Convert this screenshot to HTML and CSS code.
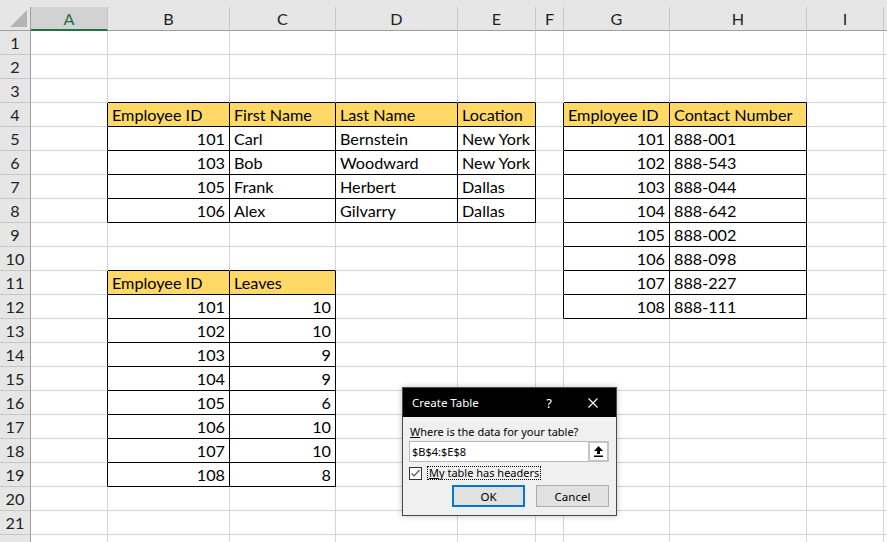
FILE: index.html
```html
<!DOCTYPE html>
<html lang="en">
<head>
  <meta charset="UTF-8">
  <title>Create Table</title>
  <link rel="stylesheet" href="styles.css">
</head>
<body>
  <div class="window">
    <div class="top-strip"></div>

    <!-- Sheet grid: row header + columns A..J -->
    <div class="sheet">
      <div class="corner"><svg width="17" height="17" viewBox="0 0 17 17"><polygon points="0,17 17,0 17,17" fill="#b4b4b4"/></svg></div>
      <div class="col-head active">A</div>
      <div class="col-head">B</div>
      <div class="col-head">C</div>
      <div class="col-head">D</div>
      <div class="col-head">E</div>
      <div class="col-head">F</div>
      <div class="col-head">G</div>
      <div class="col-head">H</div>
      <div class="col-head">I</div>
      <div class="col-head"></div>

      <!-- 1 -->
      <div class="row-head">1</div>
      <div></div><div></div><div></div><div></div><div></div><div></div><div></div><div></div><div></div><div></div>
      <!-- 2 -->
      <div class="row-head">2</div>
      <div></div><div></div><div></div><div></div><div></div><div></div><div></div><div></div><div></div><div></div>
      <!-- 3 -->
      <div class="row-head">3</div>
      <div></div><div class="bb"></div><div class="bb"></div><div class="bb"></div><div class="bb"></div><div></div><div class="bb"></div><div class="bb"></div><div></div><div></div>
      <!-- 4 -->
      <div class="row-head">4</div>
      <div class="br"></div>
      <div class="t head">Employee ID</div>
      <div class="t head">First Name</div>
      <div class="t head">Last Name</div>
      <div class="t head">Location</div>
      <div class="br"></div>
      <div class="t head">Employee ID</div>
      <div class="t head">Contact Number</div>
      <div></div><div></div>
      <!-- 5 -->
      <div class="row-head">5</div>
      <div class="br"></div>
      <div class="t num">101</div><div class="t">Carl</div><div class="t">Bernstein</div><div class="t">New York</div>
      <div class="br"></div>
      <div class="t num">101</div><div class="t">888-001</div>
      <div></div><div></div>
      <!-- 6 -->
      <div class="row-head">6</div>
      <div class="br"></div>
      <div class="t num">103</div><div class="t">Bob</div><div class="t">Woodward</div><div class="t">New York</div>
      <div class="br"></div>
      <div class="t num">102</div><div class="t">888-543</div>
      <div></div><div></div>
      <!-- 7 -->
      <div class="row-head">7</div>
      <div class="br"></div>
      <div class="t num">105</div><div class="t">Frank</div><div class="t">Herbert</div><div class="t">Dallas</div>
      <div class="br"></div>
      <div class="t num">103</div><div class="t">888-044</div>
      <div></div><div></div>
      <!-- 8 -->
      <div class="row-head">8</div>
      <div class="br"></div>
      <div class="t num">106</div><div class="t">Alex</div><div class="t">Gilvarry</div><div class="t">Dallas</div>
      <div class="br"></div>
      <div class="t num">104</div><div class="t">888-642</div>
      <div></div><div></div>
      <!-- 9 -->
      <div class="row-head">9</div>
      <div></div><div></div><div></div><div></div><div></div>
      <div class="br"></div>
      <div class="t num">105</div><div class="t">888-002</div>
      <div></div><div></div>
      <!-- 10 -->
      <div class="row-head">10</div>
      <div></div><div class="bb"></div><div class="bb"></div><div></div><div></div>
      <div class="br"></div>
      <div class="t num">106</div><div class="t">888-098</div>
      <div></div><div></div>
      <!-- 11 -->
      <div class="row-head">11</div>
      <div class="br"></div>
      <div class="t head">Employee ID</div><div class="t head">Leaves</div>
      <div></div><div></div>
      <div class="br"></div>
      <div class="t num">107</div><div class="t">888-227</div>
      <div></div><div></div>
      <!-- 12 -->
      <div class="row-head">12</div>
      <div class="br"></div>
      <div class="t num">101</div><div class="t num">10</div>
      <div></div><div></div>
      <div class="br"></div>
      <div class="t num">108</div><div class="t">888-111</div>
      <div></div><div></div>
      <!-- 13 -->
      <div class="row-head">13</div>
      <div class="br"></div>
      <div class="t num">102</div><div class="t num">10</div>
      <div></div><div></div><div></div><div></div><div></div><div></div><div></div>
      <!-- 14 -->
      <div class="row-head">14</div>
      <div class="br"></div>
      <div class="t num">103</div><div class="t num">9</div>
      <div></div><div></div><div></div><div></div><div></div><div></div><div></div>
      <!-- 15 -->
      <div class="row-head">15</div>
      <div class="br"></div>
      <div class="t num">104</div><div class="t num">9</div>
      <div></div><div></div><div></div><div></div><div></div><div></div><div></div>
      <!-- 16 -->
      <div class="row-head">16</div>
      <div class="br"></div>
      <div class="t num">105</div><div class="t num">6</div>
      <div></div><div></div><div></div><div></div><div></div><div></div><div></div>
      <!-- 17 -->
      <div class="row-head">17</div>
      <div class="br"></div>
      <div class="t num">106</div><div class="t num">10</div>
      <div></div><div></div><div></div><div></div><div></div><div></div><div></div>
      <!-- 18 -->
      <div class="row-head">18</div>
      <div class="br"></div>
      <div class="t num">107</div><div class="t num">10</div>
      <div></div><div></div><div></div><div></div><div></div><div></div><div></div>
      <!-- 19 -->
      <div class="row-head">19</div>
      <div class="br"></div>
      <div class="t num">108</div><div class="t num">8</div>
      <div></div><div></div><div></div><div></div><div></div><div></div><div></div>
      <!-- 20 -->
      <div class="row-head">20</div>
      <div></div><div></div><div></div><div></div><div></div><div></div><div></div><div></div><div></div><div></div>
      <!-- 21 -->
      <div class="row-head">21</div>
      <div></div><div></div><div></div><div></div><div></div><div></div><div></div><div></div><div></div><div></div>
      <!-- 22 (only its top edge is in view) -->
      <div class="row-head"></div>
      <div></div><div></div><div></div><div></div><div></div><div></div><div></div><div></div><div></div><div></div>
    </div>

    <!-- Create Table dialog -->
    <div class="dialog">
      <div class="dlg-title">
        <span class="dlg-caption">Create Table</span>
        <span class="dlg-help">?</span>
        <svg class="dlg-close" width="10" height="10" viewBox="0 0 10 10"><path d="M0.5 0.5 L9.5 9.5 M9.5 0.5 L0.5 9.5" stroke="#fff" stroke-width="1.1"/></svg>
      </div>
      <div class="dlg-body">
        <div class="dlg-label"><u>W</u>here is the data for your table?</div>
        <div class="range">
          <span class="range-text">$B$4:$E$8</span>
          <span class="range-btn">
            <svg width="9" height="11" viewBox="0 0 9 11"><polygon points="4.5,0 0,5 9,5" fill="#000"/><rect x="3" y="4.5" width="3" height="3.5" fill="#000"/><rect x="0" y="9.5" width="9" height="1.5" fill="#000"/></svg>
          </span>
        </div>
        <div class="check-row">
          <span class="checkbox"><svg width="11" height="11" viewBox="0 0 11 11"><polyline points="1.5,5.5 4,8 9.5,2" fill="none" stroke="#555" stroke-width="1.2"/></svg></span>
          <span class="check-label"><u>M</u>y table has headers</span>
        </div>
        <div class="dlg-buttons">
          <button class="btn btn-default">OK</button>
          <button class="btn">Cancel</button>
        </div>
      </div>
    </div>
  </div>
</body>
</html>
```

FILE: styles.css
```css
body {
  margin: 0;
  padding: 0;
  background: #ffffff;
  overflow: hidden;
}

.window {
  position: relative;
  width: 887px;
  height: 542px;
  overflow: hidden;
  font-family: 'Lato', 'Liberation Sans', sans-serif;
}

.top-strip {
  height: 7px;
  background: #e6e6e6;
}

/* Sheet grid */
.sheet {
  display: grid;
  grid-template-columns: 31px 77px 122px 106px 122px 78px 28px 106px 137px 77px 1fr;
  grid-auto-rows: 24px;
}

.sheet > div {
  box-sizing: border-box;
  border-right: 1px solid #d4d4d4;
  border-bottom: 1px solid #d4d4d4;
  font-size: 16.2px;
  line-height: 19px;
  padding: 2px 4px 0;
  color: #000;
  white-space: nowrap;
}

.sheet > .corner {
  background: #e6e6e6;
  border-right: 1px solid #9e9e9e;
  border-bottom: 1px solid #9e9e9e;
  padding: 0;
  display: flex;
  justify-content: flex-end;
  align-items: flex-end;
}

.corner svg {
  margin: 0 3px 3px 0;
}

.sheet > .col-head {
  background: #e6e6e6;
  border-right: 1px solid #c6c6c6;
  border-bottom: 1px solid #9e9e9e;
  text-align: center;
  color: #222;
  padding: 2px 0 0;
}

.sheet > .col-head.active {
  background: #d2d2d2;
  color: #1f6e43;
  border-bottom: 2px solid #217346;
}

.sheet > .row-head {
  background: #e6e6e6;
  border-right: 1px solid #9e9e9e;
  border-bottom: 1px solid #c6c6c6;
  text-align: center;
  color: #222;
  padding: 2px 0 0;
}

/* Bordered table cells */
.sheet > .t {
  border-right-color: #000;
  border-bottom-color: #000;
}

.sheet > .br {
  border-right-color: #000;
}

.sheet > .bb {
  border-bottom-color: #000;
}

.sheet > .head {
  background: #ffd966;
}

.sheet > .num {
  text-align: right;
}

/* Dialog */
.dialog {
  position: absolute;
  left: 402px;
  top: 387px;
  width: 215px;
  height: 129px;
  box-sizing: border-box;
  border: 1px solid #4a4a4a;
  background: #f0f0f0;
  box-shadow: 0 0 6px rgba(0, 0, 0, 0.25);
  font-family: 'Noto Sans', 'Open Sans', sans-serif;
  font-size: 11px;
  color: #000;
}

.dlg-title {
  height: 29px;
  background: #000;
  color: #fff;
  display: flex;
  align-items: center;
  padding-left: 9px;
  font-size: 11.5px;
}

.dlg-caption {
  flex: 1;
}

.dlg-help {
  font-size: 13px;
  margin-right: 36px;
}

.dlg-close {
  margin-right: 18px;
}

.dlg-body {
  padding: 6px 7px 0 6px;
  display: flex;
  flex-direction: column;
}

.dlg-label {
  height: 17px;
  line-height: 17px;
  margin-left: 1px;
}

.range {
  margin-top: 1px;
  width: 200px;
  height: 21px;
  box-sizing: border-box;
  border: 1px solid #b9b9b9;
  background: #fff;
  display: flex;
  align-items: stretch;
}

.range-text {
  flex: 1;
  padding-left: 2px;
  line-height: 19px;
  font-size: 11px;
}

.range-btn {
  width: 21px;
  box-sizing: border-box;
  border: 2px solid #c4c4c4;
  margin: -1px -1px -1px 0;
  background: #fff;
  display: flex;
  align-items: center;
  justify-content: center;
}

.check-row {
  margin-top: 4px;
  height: 14px;
  display: flex;
  align-items: center;
}

.checkbox {
  width: 13px;
  height: 13px;
  box-sizing: border-box;
  border: 1px solid #333;
  background: #fff;
  display: flex;
  align-items: center;
  justify-content: center;
}

.check-label {
  margin-left: 5px;
  border: 1px dotted #000;
  line-height: 12px;
  padding: 0 1px;
}

.dlg-buttons {
  margin-top: 5px;
  width: 200px;
  display: flex;
  justify-content: flex-end;
  gap: 11px;
}

.btn {
  height: 22px;
  width: 73px;
  box-sizing: border-box;
  background: #e1e1e1;
  border: 1px solid #adadad;
  font-family: 'Noto Sans', 'Open Sans', sans-serif;
  font-size: 11.5px;
  color: #000;
  padding: 0;
}

.btn-default {
  border: 2px solid #0078d7;
}
```
